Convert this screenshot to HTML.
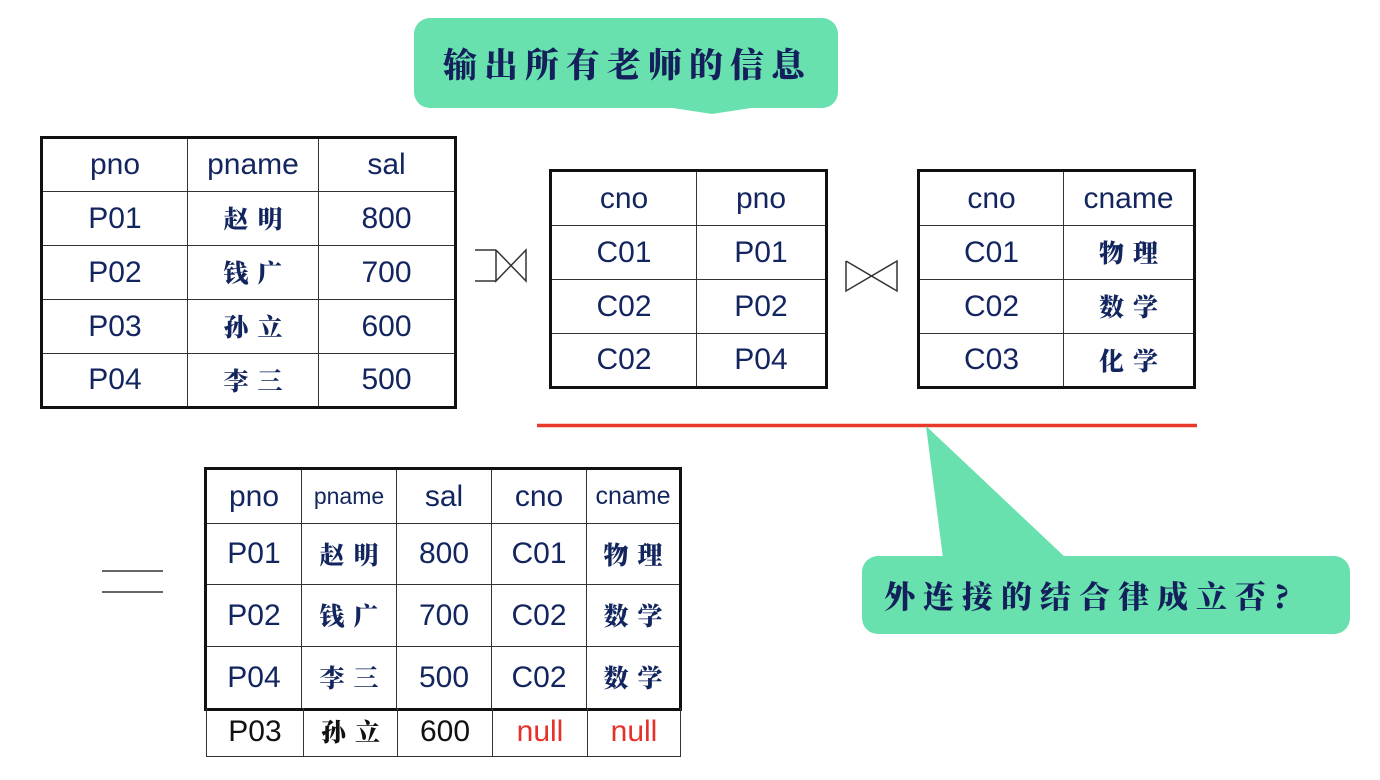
<!DOCTYPE html>
<html><head><meta charset="utf-8"><style>
body{margin:0;width:1380px;height:780px;background:#fff;position:relative;overflow:hidden;font-family:"Liberation Sans","Noto Sans CJK SC",sans-serif;color:#12255e}
table{position:absolute;border-collapse:collapse;table-layout:fixed;border:3px solid #111}
td{border:1.5px solid #333;text-align:center;padding:0;font-size:30px;line-height:1;overflow:hidden;white-space:nowrap}
.zh{font-family:"Noto Serif CJK SC","Noto Sans CJK SC",serif;font-weight:900;font-size:25px;letter-spacing:9px;text-indent:9px}
.bubble{position:absolute;background:#69e1ae;border-radius:16px;font-family:"Noto Serif CJK SC",serif;font-weight:900;color:#13205c;white-space:nowrap}
.red{color:#e8302a}
.blk{color:#111}
</style></head><body>

<div class="bubble" style="left:414px;top:18px;width:424px;height:90px;font-size:34px;letter-spacing:7px;line-height:90px;text-indent:29px">输出所有老师的信息</div>
<svg style="position:absolute;left:0;top:0" width="1380" height="780">
<polygon points="660,106 712,114 764,106" fill="#69e1ae"/>
<line x1="537" y1="425.5" x2="1197" y2="425.5" stroke="#e8392c" stroke-width="3.5"/>
<polygon points="926,426 943,558 1066,558" fill="#69e1ae"/>
<g stroke="#333" stroke-width="1.5" fill="none">
<line x1="475" y1="250" x2="496" y2="250"/><line x1="475" y1="281" x2="496" y2="281"/>
<polyline points="496,250 496,281 526,250 526,281 496,250"/>
<polyline points="846,261 846,291 897,261 897,291 846,261"/>
<line x1="102" y1="571" x2="163" y2="571"/><line x1="102" y1="592" x2="163" y2="592"/>
</g>
</svg>
<div class="bubble" style="left:862px;top:556px;width:488px;height:78px;font-size:31px;letter-spacing:8px;line-height:78px;text-indent:22px">外连接的结合律成立否?</div>

<table style="left:40px;top:136px;width:414px">
<col style="width:146px"><col style="width:131px"><col style="width:137px">
<tr style="height:54px"><td>pno</td><td>pname</td><td>sal</td></tr>
<tr style="height:54px"><td>P01</td><td class="zh">赵明</td><td>800</td></tr>
<tr style="height:54px"><td>P02</td><td class="zh">钱广</td><td>700</td></tr>
<tr style="height:54px"><td>P03</td><td class="zh">孙立</td><td>600</td></tr>
<tr style="height:54px"><td>P04</td><td class="zh">李三</td><td>500</td></tr>
</table>

<table style="left:549px;top:169px;width:276px">
<col style="width:146px"><col style="width:130px">
<tr style="height:55px"><td>cno</td><td>pno</td></tr>
<tr style="height:54px"><td>C01</td><td>P01</td></tr>
<tr style="height:54px"><td>C02</td><td>P02</td></tr>
<tr style="height:54px"><td>C02</td><td>P04</td></tr>
</table>

<table style="left:917px;top:169px;width:276px">
<col style="width:145px"><col style="width:131px">
<tr style="height:55px"><td>cno</td><td>cname</td></tr>
<tr style="height:54px"><td>C01</td><td class="zh">物理</td></tr>
<tr style="height:54px"><td>C02</td><td class="zh">数学</td></tr>
<tr style="height:54px"><td>C03</td><td class="zh">化学</td></tr>
</table>

<table style="left:204px;top:467px;width:475px">
<col style="width:96px"><col style="width:95px"><col style="width:95px"><col style="width:95px"><col style="width:94px">
<tr style="height:55px"><td>pno</td><td style="font-size:23px">pname</td><td>sal</td><td>cno</td><td style="font-size:25px">cname</td></tr>
<tr style="height:61px"><td>P01</td><td class="zh">赵明</td><td>800</td><td>C01</td><td class="zh">物理</td></tr>
<tr style="height:62px"><td>P02</td><td class="zh">钱广</td><td>700</td><td>C02</td><td class="zh">数学</td></tr>
<tr style="height:63px"><td>P04</td><td class="zh">李三</td><td>500</td><td>C02</td><td class="zh">数学</td></tr>
</table>
<table style="left:206px;top:708px;width:474px;border:none;border-bottom:1.5px solid #555">
<col style="width:97px"><col style="width:94px"><col style="width:95px"><col style="width:95px"><col style="width:93px">
<tr style="height:48px"><td class="blk" style="border-top:none">P03</td><td class="zh blk" style="border-top:none">孙立</td><td class="blk" style="border-top:none">600</td><td class="red" style="border-top:none">null</td><td class="red" style="border-top:none">null</td></tr>
</table>
</body></html>
